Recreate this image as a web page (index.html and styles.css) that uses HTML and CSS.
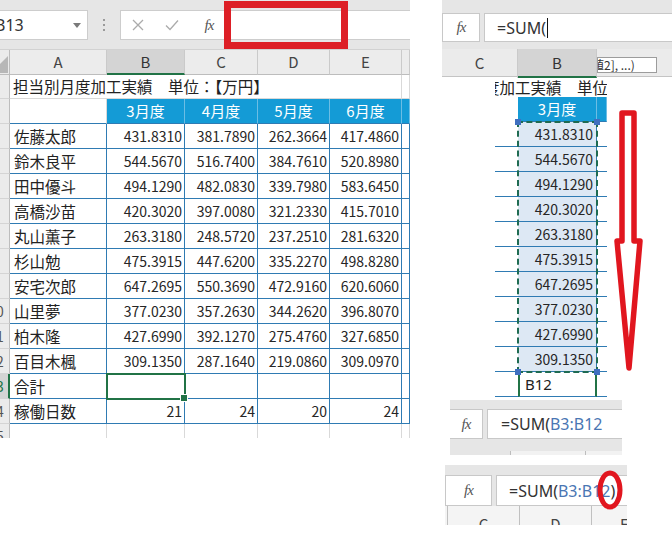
FILE: index.html
```html
<!DOCTYPE html>
<html lang="ja">
<head>
<meta charset="utf-8">
<title>SUM</title>
<link rel="stylesheet" href="styles.css">
</head>
<body>
<div class="page">
  <section class="left">
    <div class="fbar">
      <div class="namebox"><span class="nb-text">B13</span><span class="dd"></span></div>
      <div class="vdots"><i></i><i></i><i></i></div>
      <div class="fbox">
        <span class="ic"><svg width="12" height="12" viewBox="0 0 12 12"><path d="M1 1 L11 11 M11 1 L1 11" stroke="#ababab" stroke-width="1.3" fill="none"/></svg></span>
        <span class="ic"><svg width="14" height="12" viewBox="0 0 14 12"><path d="M1 6.5 L5 10.5 L13 1.5" stroke="#ababab" stroke-width="1.3" fill="none"/></svg></span>
        <span class="ic fx">fx</span>
        <span class="finput"></span>
      </div>
      <div class="redbox"></div>
    </div>
    <div class="sheet">
      <div class="c corner"><svg width="10" height="25" viewBox="0 0 10 25"><polygon points="0,23 0,14 8,6 8,23" fill="#b7b7b7"/></svg></div>
      <div class="c ch">A</div>
      <div class="c ch sel">B</div>
      <div class="c ch">C</div>
      <div class="c ch">D</div>
      <div class="c ch">E</div>
      <div class="c ch"></div>

      <div class="c rh"><span>1</span></div>
      <div class="c ttl">担当別月度加工実績　単位：【万円】</div>
      <div class="c"></div>

      <div class="c rh"><span>2</span></div>
      <div class="c a2"></div>
      <div class="c hd">3月度</div>
      <div class="c hd">4月度</div>
      <div class="c hd">5月度</div>
      <div class="c hd">6月度</div>
      <div class="c hd"></div>

      <div class="c rh"><span>3</span></div>
      <div class="c bl nm">佐藤太郎</div><div class="c bl num">431.8310</div><div class="c bl num">381.7890</div><div class="c bl num">262.3664</div><div class="c bl num">417.4860</div><div class="c bl"></div>
      <div class="c rh"><span>4</span></div>
      <div class="c bl nm">鈴木良平</div><div class="c bl num">544.5670</div><div class="c bl num">516.7400</div><div class="c bl num">384.7610</div><div class="c bl num">520.8980</div><div class="c bl"></div>
      <div class="c rh"><span>5</span></div>
      <div class="c bl nm">田中優斗</div><div class="c bl num">494.1290</div><div class="c bl num">482.0830</div><div class="c bl num">339.7980</div><div class="c bl num">583.6450</div><div class="c bl"></div>
      <div class="c rh"><span>6</span></div>
      <div class="c bl nm">高橋沙苗</div><div class="c bl num">420.3020</div><div class="c bl num">397.0080</div><div class="c bl num">321.2330</div><div class="c bl num">415.7010</div><div class="c bl"></div>
      <div class="c rh"><span>7</span></div>
      <div class="c bl nm">丸山薫子</div><div class="c bl num">263.3180</div><div class="c bl num">248.5720</div><div class="c bl num">237.2510</div><div class="c bl num">281.6320</div><div class="c bl"></div>
      <div class="c rh"><span>8</span></div>
      <div class="c bl nm">杉山勉</div><div class="c bl num">475.3915</div><div class="c bl num">447.6200</div><div class="c bl num">335.2270</div><div class="c bl num">498.8280</div><div class="c bl"></div>
      <div class="c rh"><span>9</span></div>
      <div class="c bl nm">安宅次郎</div><div class="c bl num">647.2695</div><div class="c bl num">550.3690</div><div class="c bl num">472.9160</div><div class="c bl num">620.6060</div><div class="c bl"></div>
      <div class="c rh"><span>10</span></div>
      <div class="c bl nm">山里夢</div><div class="c bl num">377.0230</div><div class="c bl num">357.2630</div><div class="c bl num">344.2620</div><div class="c bl num">396.8070</div><div class="c bl"></div>
      <div class="c rh"><span>11</span></div>
      <div class="c bl nm">柏木隆</div><div class="c bl num">427.6990</div><div class="c bl num">392.1270</div><div class="c bl num">275.4760</div><div class="c bl num">327.6850</div><div class="c bl"></div>
      <div class="c rh"><span>12</span></div>
      <div class="c bl nm">百目木楓</div><div class="c bl num">309.1350</div><div class="c bl num">287.1640</div><div class="c bl num">219.0860</div><div class="c bl num">309.0970</div><div class="c bl"></div>
      <div class="c rh rsel"><span>13</span></div>
      <div class="c bl nm">合計</div><div class="c bl num b13"></div><div class="c bl num"></div><div class="c bl num"></div><div class="c bl num"></div><div class="c bl"></div>
      <div class="c rh"><span>14</span></div>
      <div class="c bl nm">稼働日数</div><div class="c bl num">21</div><div class="c bl num">24</div><div class="c bl num">20</div><div class="c bl num">24</div><div class="c bl"></div>
      <div class="c rh last"><span>15</span></div>
      <div class="c last"></div><div class="c last"></div><div class="c last"></div><div class="c last"></div><div class="c last"></div><div class="c last"></div>
    </div>
  </section>

  <div class="gap"></div>

  <section class="right">
    <div class="shot1">
      <div class="s1bar">
        <div class="fxbox"><span class="fx">fx</span></div>
        <div class="fin">=SUM(<span class="caret"></span></div>
      </div>
      <div class="s1head">
        <div class="hc">C</div>
        <div class="hc sel">B</div>
        <div class="hc hc-r"></div>
      </div>
      <div class="s1grid">
        <div class="g0"></div>
        <div class="g ttl2"><span>担当別月度加工実績　単位：【万円】</span></div>
        <div class="g0"></div>

        <div class="g0"></div>
        <div class="g"></div>
        <div class="g hd">3月度</div>
        <div class="g hd"></div>
        <div class="g0"></div>

        <div class="g0"></div><div class="g bl"></div><div class="g bl num fill">431.8310</div><div class="g bl"></div><div class="g0"></div>
        <div class="g0"></div><div class="g bl"></div><div class="g bl num fill">544.5670</div><div class="g bl"></div><div class="g0"></div>
        <div class="g0"></div><div class="g bl"></div><div class="g bl num fill">494.1290</div><div class="g bl"></div><div class="g0"></div>
        <div class="g0"></div><div class="g bl"></div><div class="g bl num fill">420.3020</div><div class="g bl"></div><div class="g0"></div>
        <div class="g0"></div><div class="g bl"></div><div class="g bl num fill">263.3180</div><div class="g bl"></div><div class="g0"></div>
        <div class="g0"></div><div class="g bl"></div><div class="g bl num fill">475.3915</div><div class="g bl"></div><div class="g0"></div>
        <div class="g0"></div><div class="g bl"></div><div class="g bl num fill">647.2695</div><div class="g bl"></div><div class="g0"></div>
        <div class="g0"></div><div class="g bl"></div><div class="g bl num fill">377.0230</div><div class="g bl"></div><div class="g0"></div>
        <div class="g0"></div><div class="g bl"></div><div class="g bl num fill">427.6990</div><div class="g bl"></div><div class="g0"></div>
        <div class="g0"></div><div class="g bl"></div><div class="g bl num fill">309.1350</div><div class="g bl"></div><div class="g0"></div>

        <div class="g0"></div><div class="g bl"></div><div class="g bl edit">B12</div><div class="g bl"></div><div class="g0"></div>

        <div class="marquee"><i class="hdl tl"></i><i class="hdl tr"></i><i class="hdl bl2"></i><i class="hdl br"></i></div>
      </div>
      <div class="tip"><span>値2], ...)</span></div>
      <svg class="arrow" width="45" height="285" viewBox="0 0 45 285"><path d="M15 13 H27 V141 H33 L22 268 L10 141 H15 Z" fill="none" stroke="#e1161f" stroke-width="5.5" stroke-linejoin="round"/></svg>
    </div>

    <div class="shot2">
      <div class="s2row">
        <div class="fxbox fx2"><span class="fx">fx</span></div>
        <div class="fin">=SUM(<span class="ref">B3:B12</span></div>
      </div>
      <div class="s2strip"><i></i></div>
    </div>

    <div class="shot3">
      <div class="s3row">
        <div class="fxbox fx3"><span class="fx">fx</span></div>
        <div class="fin">=SUM(<span class="ref">B3:B12</span>)</div>
      </div>
      <div class="s3head">
        <div class="s3c"></div>
        <div class="s3c">C</div>
        <div class="s3c">D</div>
        <div class="s3c">E</div>
      </div>
      <svg class="ring" width="32" height="46" viewBox="0 0 32 46"><ellipse cx="16" cy="23" rx="10" ry="17" fill="none" stroke="#e1161f" stroke-width="5"/></svg>
    </div>
  </section>
</div>
</body>
</html>
```

FILE: styles.css
```css
* { box-sizing: border-box; }
html, body { margin: 0; padding: 0; }
body {
  width: 672px;
  height: 545px;
  background: #fff;
  font-family: "Noto Sans CJK JP", "Noto Sans", sans-serif;
  color: #222;
  overflow: hidden;
}
.page { display: flex; align-items: flex-start; width: 672px; height: 545px; }

/* ---------- left screenshot ---------- */
.left { width: 410px; height: 438px; overflow: hidden; position: relative; flex: none; }
.fbar {
  height: 50px;
  background: #e6e6e6;
  display: flex;
  align-items: flex-start;
  padding-top: 10px;
  border-bottom: 1px solid #d2d2d2;
  position: relative;
}
.namebox {
  width: 88px; height: 30px; flex: none;
  background: #fff;
  border: 1px solid #cdcdcd; border-left: none;
  display: flex; align-items: center;
  overflow: hidden;
}
.nb-text { font-family: "Noto Sans", sans-serif; font-size: 16px; margin-left: -5px; color: #333; }
.dd {
  margin-left: auto; margin-right: 6px;
  border-top: 5px solid #7a7a7a;
  border-left: 4px solid transparent;
  border-right: 4px solid transparent;
}
.vdots { width: 32px; height: 30px; flex: none; display: flex; flex-direction: column; align-items: center; justify-content: center; gap: 3px; }
.vdots i { display: block; width: 2px; height: 2px; background: #9a9a9a; }
.fbox {
  flex: 1; height: 30px;
  background: #fff;
  border: 1px solid #cdcdcd; border-right: none;
  display: flex; align-items: center;
}
.ic { width: 34px; display: flex; justify-content: center; align-items: center; flex: none; }
.fx { font-family: "Liberation Serif", serif; font-style: italic; font-size: 15px; color: #555; letter-spacing: -1px; }
.fbox .fx { width: 40px; }
.finput { flex: 1; height: 100%; }
.redbox {
  position: absolute; left: 224px; top: 1px;
  width: 124px; height: 48px;
  border: 7px solid #dd1f26;
}

.sheet {
  display: grid;
  grid-template-columns: 10px 97px 78px 73px 72px 72px 8px;
  grid-template-rows: 25px 24px repeat(13, 25px) 14px;
}
.c {
  border-right: 1px solid #d9d9d9;
  border-bottom: 1px solid #d9d9d9;
  font-size: 15.5px;
  line-height: 24px;
  white-space: nowrap;
  overflow: hidden;
}
.corner { background: #ebebeb; border-right-color: #bdbdbd; border-bottom-color: #bdbdbd; }
.corner svg { display: block; }
.ch {
  background: #ececec;
  border-right-color: #cacaca;
  border-bottom-color: #bdbdbd;
  text-align: center;
  color: #444;
  font-size: 15px;
  line-height: 24px;
}
.ch.sel, .hc.sel { background: #d4d4d4; border-bottom: 2px solid #217346; color: #333; }
.rh {
  background: #ebebeb;
  border-right-color: #bdbdbd;
  border-bottom-color: #d4d4d4;
  color: #555;
  font-size: 14px;
}
.rh span { display: block; width: 28px; margin-left: -18px; text-align: center; }
.rh.rsel { background: #d4d4d4; border-right: 2px solid #217346; color: #217346; }
.ttl { grid-column: span 5; padding-left: 3px; line-height: 23px; }
.a2 { border-bottom-color: #2f7bb3; }
.hd {
  background: #149bd6;
  color: #fff;
  text-align: center;
  font-size: 15px;
  border-right-color: #6cbde4;
  border-bottom-color: #2f7bb3;
}
.bl { border-right-color: #2f7bb3; border-bottom-color: #2f7bb3; }
.nm { padding-left: 4px; }
.num { text-align: right; padding-right: 2px; font-size: 14px; color: #262626; }
.b13 { position: relative; overflow: visible; outline: 2px solid #217346; outline-offset: -1px; }
.b13::after {
  content: ""; position: absolute; right: -4px; bottom: -4px;
  width: 6px; height: 6px; background: #217346; border: 1px solid #fff;
}
.last { border-bottom: none; }

/* ---------- right screenshots ---------- */
.gap { width: 32px; flex: none; }
.right { width: 230px; flex: none; display: flex; flex-direction: column; align-items: flex-start; }

.shot1 { width: 230px; height: 398px; position: relative; }
.s1bar { height: 49px; background: #e6e6e6; display: flex; gap: 4px; padding-top: 13px; }
.fxbox {
  width: 38px; height: 29px; flex: none;
  background: #fff; border: 1px solid #c8c8c8;
  display: flex; align-items: center; justify-content: center;
}
.fin {
  flex: 1; height: 29px;
  background: #fff; border: 1px solid #c8c8c8; border-right: none;
  font-family: "Noto Sans", sans-serif; font-size: 16px; color: #333;
  padding-left: 12px;
  display: flex; align-items: center;
  white-space: nowrap; overflow: hidden;
}
.caret { display: inline-block; width: 1px; height: 20px; background: #111; margin-left: 1px; }
.ref { color: #4a76b3; }
.s1head {
  display: grid; grid-template-columns: 76px 79px 75px;
  height: 28px; background: #ebebeb; border-bottom: 1px solid #c4c4c4;
}
.hc { text-align: center; font-size: 15px; line-height: 27px; color: #444; border-right: 1px solid #cacaca; }
.hc-r { border-right: none; }

.s1grid {
  display: grid;
  grid-template-columns: 53px 23px 79px 10px 65px;
  grid-template-rows: 20px repeat(12, 25px);
  position: relative;
}
.g { font-size: 15px; line-height: 24px; white-space: nowrap; overflow: hidden; }
.ttl2 { grid-column: span 3; }
.ttl2 span { display: block; margin-left: -73px; line-height: 20px; font-size: 15.5px; }
.g.hd { border-bottom: 1px solid #2f7bb3; border-right: 1px solid #6cbde4; }
.g.bl { border-bottom: 1px solid #2f7bb3; }
.g.num { padding-right: 3px; font-size: 14px; }
.fill { background: #dde8f4; border-right: 1px solid #2f7bb3; }
.edit { padding-left: 5px; color: #222; border: 2px solid #217346; border-top: none; border-bottom-style: dashed; font-family: "Noto Sans", sans-serif; }
.marquee {
  position: absolute; left: 75px; top: 44px;
  width: 81px; height: 252px;
  border: 2px dashed #1f6b52;
  pointer-events: none;
}
.hdl { position: absolute; width: 6px; height: 6px; background: #3f6fc0; }
.hdl.tl { left: -4px; top: -4px; }
.hdl.tr { right: -4px; top: -4px; }
.hdl.bl2 { left: -4px; bottom: -4px; }
.hdl.br { right: -4px; bottom: -4px; }
.tip {
  position: absolute; left: 155px; top: 57px;
  width: 60px; height: 16px;
  background: #fff; border: 1px solid #9c9c9c;
  font-size: 12px; line-height: 14px; color: #333;
  overflow: hidden; white-space: nowrap;
}
.tip span { display: block; margin-left: -6px; }
.arrow { position: absolute; left: 165px; top: 100px; }

.shot2 {
  margin-left: 8px; margin-top: 2px;
  width: 172px; height: 55px;
  background: #e6e6e6;
  padding-top: 9px;
  position: relative;
}
.s2row, .s3row { display: flex; gap: 4px; height: 30px; }
.s2row .fin, .s3row .fin { height: 30px; }
.fx2 { width: 33px; height: 30px; border-left: none; }
.s2row .fin { padding-left: 13px; }
.s2strip {
  margin: 12px 0 0 60px; height: 4px;
  background: #f2f2f2; border-left: 1px solid #bdbdbd;
  position: relative;
}
.s2strip i { position: absolute; left: 74px; top: 0; width: 1px; height: 4px; background: #bdbdbd; }

.shot3 {
  margin-left: 3px; margin-top: 10px;
  width: 182px; height: 60px;
  background: #e6e6e6;
  padding-top: 10px;
  position: relative;
  overflow: hidden;
}
.fx3 { width: 47px; height: 31px; }
.s3row { height: 31px; }
.s3row .fin { height: 31px; padding-left: 12px; }
.s3head {
  display: grid; grid-template-columns: 3px 72px 72px 35px;
  height: 19px; background: #f4f4f4;
  overflow: hidden;
}
.s3c { border-right: 1px solid #c0c0c0; text-align: center; font-size: 15px; line-height: 20px; padding-top: 8px; color: #444; }
.s3c:last-child { border-right: none; text-align: left; padding-left: 28px; }
.ring { position: absolute; left: 149px; top: 2px; }
```
